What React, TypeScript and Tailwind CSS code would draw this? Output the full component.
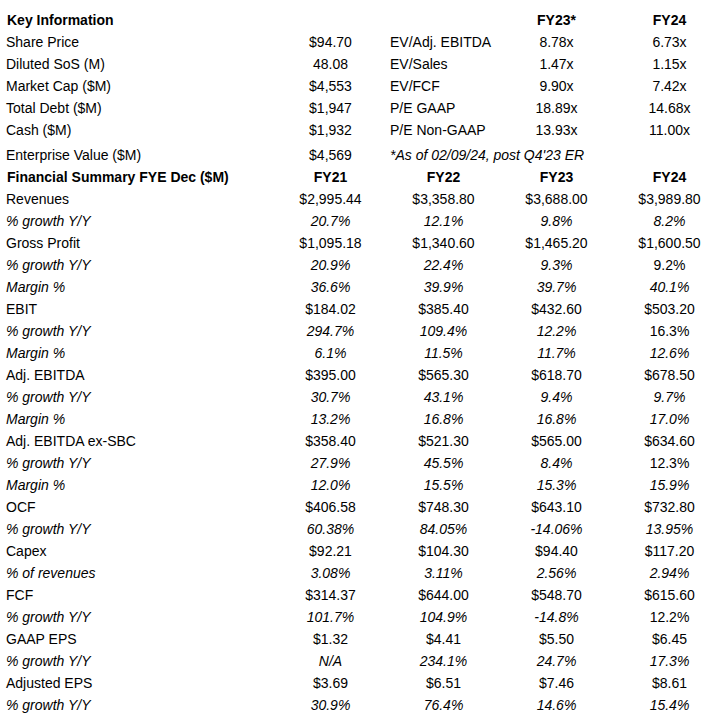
type Row = {
  label: string;
  vals: string[];
  italic?: boolean;
  upright?: number[];
};

const keyRows = [
  { label: "Share Price", val: "$94.70", metric: "EV/Adj. EBITDA", fy23: "8.78x", fy24: "6.73x" },
  { label: "Diluted SoS (M)", val: "48.08", metric: "EV/Sales", fy23: "1.47x", fy24: "1.15x" },
  { label: "Market Cap ($M)", val: "$4,553", metric: "EV/FCF", fy23: "9.90x", fy24: "7.42x" },
  { label: "Total Debt ($M)", val: "$1,947", metric: "P/E GAAP", fy23: "18.89x", fy24: "14.68x" },
  { label: "Cash ($M)", val: "$1,932", metric: "P/E Non-GAAP", fy23: "13.93x", fy24: "11.00x" },
];

const growth = "% growth Y/Y";
const margin = "Margin %";

const rows: Row[] = [
  { label: "Revenues", vals: ["$2,995.44", "$3,358.80", "$3,688.00", "$3,989.80"] },
  { label: growth, vals: ["20.7%", "12.1%", "9.8%", "8.2%"], italic: true },
  { label: "Gross Profit", vals: ["$1,095.18", "$1,340.60", "$1,465.20", "$1,600.50"] },
  { label: growth, vals: ["20.9%", "22.4%", "9.3%", "9.2%"], italic: true, upright: [3] },
  { label: margin, vals: ["36.6%", "39.9%", "39.7%", "40.1%"], italic: true },
  { label: "EBIT", vals: ["$184.02", "$385.40", "$432.60", "$503.20"] },
  { label: growth, vals: ["294.7%", "109.4%", "12.2%", "16.3%"], italic: true, upright: [3] },
  { label: margin, vals: ["6.1%", "11.5%", "11.7%", "12.6%"], italic: true },
  { label: "Adj. EBITDA", vals: ["$395.00", "$565.30", "$618.70", "$678.50"] },
  { label: growth, vals: ["30.7%", "43.1%", "9.4%", "9.7%"], italic: true },
  { label: margin, vals: ["13.2%", "16.8%", "16.8%", "17.0%"], italic: true },
  { label: "Adj. EBITDA ex-SBC", vals: ["$358.40", "$521.30", "$565.00", "$634.60"] },
  { label: growth, vals: ["27.9%", "45.5%", "8.4%", "12.3%"], italic: true, upright: [3] },
  { label: margin, vals: ["12.0%", "15.5%", "15.3%", "15.9%"], italic: true },
  { label: "OCF", vals: ["$406.58", "$748.30", "$643.10", "$732.80"] },
  { label: growth, vals: ["60.38%", "84.05%", "-14.06%", "13.95%"], italic: true },
  { label: "Capex", vals: ["$92.21", "$104.30", "$94.40", "$117.20"] },
  { label: "% of revenues", vals: ["3.08%", "3.11%", "2.56%", "2.94%"], italic: true },
  { label: "FCF", vals: ["$314.37", "$644.00", "$548.70", "$615.60"] },
  { label: growth, vals: ["101.7%", "104.9%", "-14.8%", "12.2%"], italic: true, upright: [3] },
  { label: "GAAP EPS", vals: ["$1.32", "$4.41", "$5.50", "$6.45"] },
  { label: growth, vals: ["N/A", "234.1%", "24.7%", "17.3%"], italic: true },
  { label: "Adjusted EPS", vals: ["$3.69", "$6.51", "$7.46", "$8.61"] },
  { label: growth, vals: ["30.9%", "76.4%", "14.6%", "15.4%"], italic: true },
];

export default function App() {
  return (
    <div className="w-[710px] h-[720px] overflow-hidden bg-white text-black text-[14px] leading-[22px] font-['Liberation_Sans',Arial,sans-serif] pt-[10px]">
      {/* Key information block */}
      <div className="flex h-[21px] items-end whitespace-nowrap font-bold">
        <div className="w-[274px] shrink-0 pl-[7px]">Key Information</div>
        <div className="w-[113px] shrink-0" />
        <div className="w-[113px] shrink-0" />
        <div className="w-[113px] shrink-0 text-center">FY23*</div>
        <div className="w-[113px] shrink-0 text-center">FY24</div>
      </div>
      {keyRows.map((r) => (
        <div key={r.label} className="flex h-[22px] whitespace-nowrap">
          <div className="w-[274px] shrink-0 pl-[6px]">{r.label}</div>
          <div className="w-[113px] shrink-0 text-center">{r.val}</div>
          <div className="w-[113px] shrink-0 pl-[3px]">{r.metric}</div>
          <div className="w-[113px] shrink-0 text-center">{r.fy23}</div>
          <div className="w-[113px] shrink-0 text-center">{r.fy24}</div>
        </div>
      ))}
      <div className="flex h-[25px] items-end whitespace-nowrap">
        <div className="w-[274px] shrink-0 pl-[6px]">Enterprise Value ($M)</div>
        <div className="w-[113px] shrink-0 text-center">$4,569</div>
        <div className="w-[339px] shrink-0 pl-[3px] italic">*As of 02/09/24, post Q4'23 ER</div>
      </div>

      {/* Financial summary */}
      <div className="flex h-[22px] whitespace-nowrap font-bold">
        <div className="w-[274px] shrink-0 pl-[7px]">Financial Summary FYE Dec ($M)</div>
        {["FY21", "FY22", "FY23", "FY24"].map((y) => (
          <div key={y} className="w-[113px] shrink-0 text-center">{y}</div>
        ))}
      </div>
      {rows.map((r, i) => (
        <div key={i} className="flex h-[22px] whitespace-nowrap">
          <div className={`w-[274px] shrink-0 pl-[6px] ${r.italic ? "italic" : ""}`}>{r.label}</div>
          {r.vals.map((v, j) => (
            <div
              key={j}
              className={`w-[113px] shrink-0 text-center ${r.italic && !r.upright?.includes(j) ? "italic" : ""}`}
            >
              {v}
            </div>
          ))}
        </div>
      ))}
    </div>
  );
}
